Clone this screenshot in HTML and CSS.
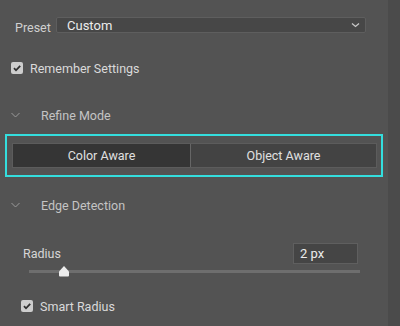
FILE: index.html
```html
<!DOCTYPE html>
<html lang="en">
<head>
  <meta charset="UTF-8">
  <title>Refine Settings</title>
  <link rel="stylesheet" href="styles.css">
</head>
<body>
  <div class="wrap">
    <div class="panel">
      <div class="preset-row">
        <span class="preset-label">Preset</span>
        <div class="select">
          <span>Custom</span>
          <svg class="select-arrow" width="9" height="6" viewBox="0 0 9 6"><path d="M1 1.5 L4.5 4.5 L8 1.5" fill="none" stroke="#c8c8c8" stroke-width="1.3"/></svg>
        </div>
      </div>

      <div class="check-row remember">
        <span class="checkbox"><svg width="12" height="12" viewBox="0 0 12 12"><path d="M3 6.2 L5 8.3 L9.2 3.8" fill="none" stroke="#2f2f2f" stroke-width="1.8"/></svg></span>
        <span>Remember Settings</span>
      </div>

      <div class="section-head refine">
        <svg class="chev" width="9" height="6" viewBox="0 0 9 6"><path d="M0.5 1 L4.5 5 L8.5 1" fill="none" stroke="#9a9a9a" stroke-width="1"/></svg>
        <span>Refine Mode</span>
      </div>

      <div class="focus-box">
        <div class="segmented">
          <div class="seg seg-on">Color Aware</div>
          <div class="seg">Object Aware</div>
        </div>
      </div>

      <div class="section-head edge">
        <svg class="chev" width="9" height="6" viewBox="0 0 9 6"><path d="M0.5 1 L4.5 5 L8.5 1" fill="none" stroke="#9a9a9a" stroke-width="1"/></svg>
        <span>Edge Detection</span>
      </div>

      <div class="radius-row">
        <span>Radius</span>
        <div class="num-input">2 px</div>
      </div>
      <div class="slider">
        <div class="track"></div>
        <svg class="thumb" width="12" height="12" viewBox="0 0 12 12"><path d="M6 1 L11 6.5 L11 10.5 Q11 11.5 10 11.5 L2 11.5 Q1 11.5 1 10.5 L1 6.5 Z" fill="#ececec"/></svg>
      </div>

      <div class="check-row smart">
        <span class="checkbox"><svg width="12" height="12" viewBox="0 0 12 12"><path d="M3 6.2 L5 8.3 L9.2 3.8" fill="none" stroke="#2f2f2f" stroke-width="1.8"/></svg></span>
        <span>Smart Radius</span>
      </div>
    </div>
    <div class="scrollbar"></div>
  </div>
</body>
</html>
```

FILE: styles.css
```css
html, body {
  margin: 0;
  height: 100%;
  overflow: hidden;
}

body {
  background: #535353;
  color: #d6d6d6;
  font-family: Roboto, "Noto Sans", sans-serif;
  font-size: 12.5px;
}

.wrap {
  display: flex;
  height: 100%;
}

.panel {
  flex: 1;
  padding-top: 17px;
}

.scrollbar {
  width: 12px;
  background: #4b4b4b;
}

.preset-row {
  display: flex;
  align-items: flex-start;
  height: 16px;
  padding-left: 15px;
}

.preset-label {
  width: 41px;
  line-height: 16px;
  margin-top: 3px;
  color: #d0d0d0;
}

.select {
  box-sizing: border-box;
  width: 310px;
  height: 16px;
  display: flex;
  align-items: center;
  justify-content: space-between;
  padding: 0 5px 0 10px;
  background: #474747;
  border: 1px solid #5e5e5e;
  border-radius: 2px;
  color: #ececec;
  font-size: 13px;
}

.select-arrow {
  display: block;
}

.check-row {
  display: flex;
  align-items: center;
  height: 12px;
  gap: 7px;
  color: #dadada;
}

.check-row.remember {
  margin-top: 29px;
  padding-left: 11px;
}

.check-row.smart {
  margin-top: 27px;
  padding-left: 21px;
}

.checkbox {
  width: 12px;
  height: 12px;
  border-radius: 2px;
  background: #cdcdcd;
  display: block;
}

.checkbox svg {
  display: block;
}

.section-head {
  display: flex;
  align-items: center;
  height: 16px;
  padding-left: 11px;
  color: #c4c4c4;
}

.section-head .chev {
  margin-right: 21px;
}

.section-head.refine {
  margin-top: 33px;
}

.section-head.edge {
  margin-top: 20px;
}

.focus-box {
  box-sizing: border-box;
  width: 378px;
  margin: 11px 0 0 5px;
  padding: 7px 4px 7px 5px;
  border: 2px solid #34dede;
}

.segmented {
  display: flex;
  height: 25px;
  box-sizing: border-box;
  border: 1px solid #5c5c5c;
}

.seg {
  flex: 1;
  display: flex;
  align-items: center;
  justify-content: center;
  background: #434343;
  color: #e0e0e0;
}

.seg-on {
  flex: 0 0 177px;
  background: #353535;
  border-right: 1px solid #666;
}

.radius-row {
  display: flex;
  align-items: center;
  justify-content: space-between;
  margin-top: 30px;
  padding: 0 30px 0 23px;
  height: 21px;
}

.num-input {
  box-sizing: border-box;
  width: 65px;
  height: 21px;
  line-height: 19px;
  padding-left: 6px;
  background: #454545;
  border: 1px solid #5f5f5f;
  color: #ececec;
  font-size: 13px;
}

.slider {
  position: relative;
  margin: 6px 0 0 29px;
  width: 331px;
  height: 3px;
}

.track {
  height: 3px;
  background: #6e6e6e;
}

.thumb {
  position: absolute;
  left: 29px;
  top: -5px;
}
```
